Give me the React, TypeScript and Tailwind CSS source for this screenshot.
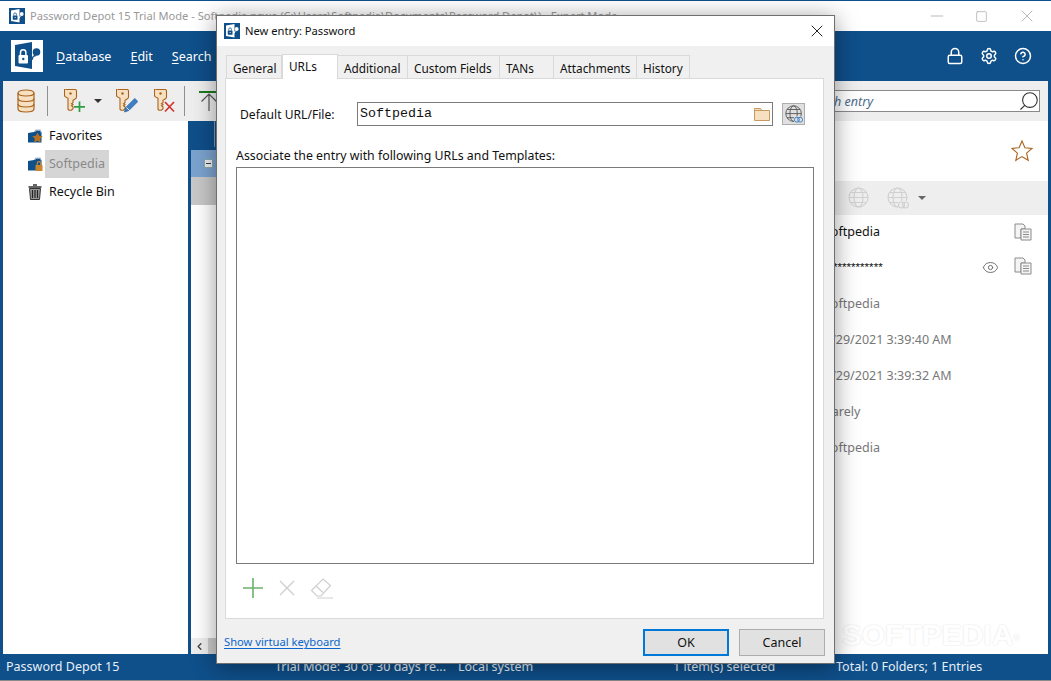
import React from "react";
import { Lock, Settings, CircleHelp, X, Minus, Square, Eye, Search, ChevronLeft } from "lucide-react";

const ORANGE = "#a9631d";
const FILL = "#f7e0c2";

function KeyIcon({ badge }: { badge: "plus" | "pen" | "x" }) {
  return (
    <svg width="22" height="24" viewBox="0 0 22 24" className="shrink-0">
      <path
        d="M2 .5h9a1.500 1.500 0 0 1 1.500 1.500v6a2 2 0 0 1-1 1.700l-2.500 1.500v2.500l-1.500 1 1.500 1-1.500 1 1.500 1v2l-1.500 1.500h-2.500l-1-1v-10.800l-2.500-1.500a2 2 0 0 1-1-1.700v-6a1.500 1.500 0 0 1 1.500-1.500z"
        fill={FILL}
        stroke={ORANGE}
        strokeWidth="1.100"
      />
      <circle cx="6.500" cy="4.500" r="1.200" fill={ORANGE} />
      {badge === "plus" && <path d="M15.500 12.500v10.500M10 17.800h11" stroke="#2f9e44" strokeWidth="1.700" fill="none" />}
      {badge === "pen" && (
        <>
          <path d="M8.500 23l1.300-4.500 9-9 3 3-9 9z" fill="#3f7fc4" stroke="#2a5f9e" strokeWidth=".8" />
          <path d="M10.500 18.500l3 3" stroke="#fff" strokeWidth=".8" />
        </>
      )}
      {badge === "x" && <path d="M11 13l9 9.500M20 13l-9 9.500" stroke="#d0342c" strokeWidth="1.700" fill="none" />}
    </svg>
  );
}

function DbIcon() {
  return (
    <svg width="18" height="24" viewBox="0 0 18 24" className="shrink-0">
      <path d="M1 4v16c0 2 3.500 3 8 3s8-1 8-3V4c0-2-3.500-3-8-3S1 2 1 4z" fill={FILL} stroke={ORANGE} strokeWidth="1.200" />
      <path d="M1 4c0 2 3.500 3 8 3s8-1 8-3M1 9.500c0 2 3.500 3 8 3s8-1 8-3M1 15c0 2 3.500 3 8 3s8-1 8-3" fill="none" stroke={ORANGE} strokeWidth="1.200" />
    </svg>
  );
}

function Globe({ chain, color, size = 22 }: { chain?: boolean; color: string; size?: number }) {
  const link = color === "#555" ? "#3f7fc4" : color;
  return (
    <svg width={size} height={size} viewBox="0 0 22 22" className="shrink-0">
      <circle cx="10.500" cy="10.500" r="9.500" fill="none" stroke={color} strokeWidth="1.100" />
      <ellipse cx="10.500" cy="10.500" rx="4.500" ry="9.500" fill="none" stroke={color} strokeWidth="1.100" />
      <path d="M1 10.500h19M2.500 5.500h16M2.500 15.500h16" fill="none" stroke={color} strokeWidth="1.100" />
      {chain && (
        <>
          <rect x="11" y="14" width="11" height="8" fill={color === "#555" ? "#e0e0e0" : "#eeeeee"} />
          <circle cx="14.500" cy="18" r="3" fill="none" stroke={link} strokeWidth="1.200" />
          <circle cx="18.500" cy="18" r="3" fill="none" stroke={link} strokeWidth="1.200" />
        </>
      )}
    </svg>
  );
}

function CopyIcon() {
  return (
    <svg width="18" height="18" viewBox="0 0 18 18" className="shrink-0">
      <path d="M1 1h8l2 2v3H7v9H1z" fill="#f4f4f4" stroke="#8a8a8a" />
      <path d="M7 6h10v11H7z" fill="#f4f4f4" stroke="#8a8a8a" />
      <path d="M9 9h6M9 11.500h6M9 14h6" stroke="#8a8a8a" />
    </svg>
  );
}

function TreeFolder({ kind }: { kind: "star" | "lock" }) {
  return (
    <svg width="15" height="14" viewBox="0 0 15 14" className="shrink-0">
      <path d="M0 4l6-1 1.500-1.500H12L13.500 3v10.500H0z" fill="#0f4f8a" />
      <path d="M7.500 3V1h5v2.500" fill="none" stroke="#9ab" strokeWidth=".8" />
      {kind === "star" ? (
        <path d="M9.500 3.500l1.700 3.300 3.600.5-2.600 2.500.6 3.700-3.300-1.700-3.300 1.700.6-3.700-2.600-2.500 3.600-.5z" fill="#b5711f" />
      ) : (
        <>
          <rect x="7.500" y="8" width="7" height="6" rx=".5" fill="#c9862d" />
          <path d="M9.200 8V6.500a1.800 1.800 0 0 1 3.600 0V8" fill="none" stroke="#c9862d" strokeWidth="1.200" />
        </>
      )}
    </svg>
  );
}

function Logo({ size, blue }: { size: number; blue: boolean }) {
  const a = blue ? "#fff" : "#0f4f8a";
  const b = blue ? "#0f4f8a" : "#fff";
  return (
    <svg width={size} height={size} viewBox="0 0 32 32" className="shrink-0">
      <rect width="32" height="32" fill={b} />
      <path d="M4 5l17-3v27L4 26z" fill={a} />
      <rect x="7.500" y="15" width="9.500" height="8.500" rx="1" fill={b} />
      <path d="M9.500 15v-2.500a2.700 2.700 0 0 1 5.400 0V15" fill="none" stroke={b} strokeWidth="1.500" />
      <circle cx="12.300" cy="19" r="1.200" fill={a} />
      <circle cx="25.500" cy="12" r="3.800" fill={a} />
      <path d="M23.500 14.500l-3.500 3.500v2.500l2-1 .5-2.500 3-1z" fill={a} />
    </svg>
  );
}

const TABS = [
  { label: "General", w: "w-[56px]" },
  { label: "URLs", w: "w-[56px]", active: true },
  { label: "Additional", w: "w-[70px]" },
  { label: "Custom Fields", w: "w-[92px]" },
  { label: "TANs", w: "w-[54px]" },
  { label: "Attachments", w: "w-[83px]" },
  { label: "History", w: "w-[53px]" },
];

function Underlined({ first, rest }: { first: string; rest: string }) {
  return (
    <span>
      <span className="underline underline-offset-2">{first}</span>
      {rest}
    </span>
  );
}

function InfoRow({ text, dark, lower, h = "h-9", icons }: { text: string; dark?: boolean; lower?: boolean; h?: string; icons?: React.ReactNode }) {
  return (
    <div className={`flex items-center ${h} pr-[16px] pl-[181px]`}>
      <span className={`${dark ? "text-[#111]" : "text-[#777]"} ${lower ? "pt-[2px]" : ""}`}>{text}</span>
      <div className="ml-auto flex items-center gap-[14px]">{icons}</div>
    </div>
  );
}

export default function App() {
  return (
    <div
      className="relative flex h-[681px] w-[1051px] flex-col overflow-hidden bg-[#0f4f8a] text-[12.500px] text-[#111]"
      style={{ fontFamily: '"Noto Sans", "Open Sans", sans-serif' }}
    >
      {/* Title bar */}
      <div className="mt-px flex h-[30px] shrink-0 items-center bg-white pr-[14px] pl-[9px]">
        <Logo size={16} blue />
        <span className="ml-[5px] text-[11.100px] whitespace-nowrap text-[#999]">
          Password Depot 15 Trial Mode - Softpedia.pswe (C:\Users\Softpedia\Documents\Password Depot\) - Expert Mode
        </span>
        <div className="ml-auto flex items-center text-[#999]">
          <Minus size={20} strokeWidth={0.800} />
          <Square size={13} strokeWidth={1.100} className="mr-[29px] ml-[28px]" />
          <X size={20} strokeWidth={0.800} />
        </div>
      </div>

      {/* Blue header */}
      <div className="flex h-[50px] shrink-0 items-center pr-[19px] pl-[11px] text-[12.500px] text-white">
        <Logo size={32} blue={false} />
        <nav className="ml-[13px] flex gap-[19px] pt-[3px]">
          <Underlined first="D" rest="atabase" />
          <Underlined first="E" rest="dit" />
          <Underlined first="S" rest="earch" />
        </nav>
        <div className="ml-auto flex items-center gap-[16px]">
          <Lock size={18} strokeWidth={2} />
          <Settings size={18} strokeWidth={2} />
          <CircleHelp size={18} strokeWidth={2} />
        </div>
      </div>

      {/* Toolbar */}
      <div className="mx-[3px] flex h-[40px] shrink-0 items-center bg-[#eeeeee] pr-[8px] pl-[14px]">
        <DbIcon />
        <div className="ml-[12px] h-[30px] w-px bg-[#8f8f8f]" />
        <div className="ml-[16px]">
          <KeyIcon badge="plus" />
        </div>
        <div className="ml-[8px] h-0 w-0 border-x-[4px] border-t-[4px] border-x-transparent border-t-[#333]" />
        <div className="ml-[14px]">
          <KeyIcon badge="pen" />
        </div>
        <div className="ml-[16px]">
          <KeyIcon badge="x" />
        </div>
        <div className="ml-[8px] h-[30px] w-px bg-[#8f8f8f]" />
        <div className="ml-[14px] flex w-[20px] flex-col items-center self-start pt-[10px]">
          <div className="h-[2px] w-[20px] bg-[#1d7a1d]" />
          <svg width="18" height="18" viewBox="0 0 18 18">
            <path d="M1.500 8.500L9 1l7.500 7.500M9 1v17" fill="none" stroke="#555" strokeWidth="1.200" />
          </svg>
        </div>
        <div className="ml-auto flex h-[22px] w-[400px] items-center border border-[#8a8a8a] bg-white pl-[163px] text-[#4a6a8a] italic">
          <span className="pt-[2px]">Search entry</span>
          <Search size={22} strokeWidth={1.200} className="-mr-px ml-auto -scale-x-100 text-[#333]" />
        </div>
      </div>

      {/* Body */}
      <div className="mx-[3px] flex min-h-0 flex-1 gap-[3px]">
        {/* Tree */}
        <div className="w-[185px] shrink-0 bg-white pt-[1px]">
          <div className="flex h-[28px] items-center pl-[25px]">
            <TreeFolder kind="star" />
            <span className="ml-[6px]">Favorites</span>
          </div>
          <div className="flex h-[28px] items-center pl-[25px]">
            <TreeFolder kind="lock" />
            <span className="ml-[2px] flex h-[28px] items-center bg-[#d5d5d5] px-[4px] text-[#8a8a8a]">Softpedia</span>
          </div>
          <div className="flex h-[28px] items-center pl-[25px]">
            <svg width="14" height="16" viewBox="0 0 14 16" className="mr-px shrink-0">
              <path d="M5 1h4M.5 3h13" stroke="#333" strokeWidth="1.500" />
              <path d="M1.500 4.500h11l-1 11h-9z" fill="#999" stroke="#333" />
              <path d="M4.500 6v8M7 6v8M9.500 6v8" stroke="#222" strokeWidth="1.200" />
            </svg>
            <span className="ml-[6px]">Recycle Bin</span>
          </div>
        </div>

        {/* Center list */}
        <div className="flex w-[449px] shrink-0 flex-col bg-white">
          <div className="h-[29px] bg-[#0f4f8a] pl-[23px]">
            <div className="h-[26px] w-px bg-[#8a9aaa]" />
          </div>
          <div className="flex h-[27px] items-center bg-[#7ba3cf] pl-[13px]">
            <div className="flex h-[9px] w-[9px] items-center justify-center border border-[#8aa] bg-[#eee]">
              <div className="h-px w-[5px] bg-[#345]" />
            </div>
          </div>
          <div className="h-[28px] bg-[#c8c8c8]" />
          <div className="flex-1" />
          <div className="flex h-[16px] items-center bg-[#eeeeee]">
            <ChevronLeft size={11} strokeWidth={3} className="ml-[3px] text-[#444]" />
            <div className="ml-[3px] h-full w-[60px] bg-[#cdcdcd]" />
          </div>
        </div>

        {/* Details */}
        <div className="flex flex-1 flex-col bg-white">
          <div className="flex h-[60px] items-center justify-end pr-[14px]">
            <svg width="24" height="24" viewBox="0 0 24 24">
              <path d="M12 2l2.900 6.700 7.100.7-5.400 4.800 1.600 7.100L12 17.600l-6.200 3.700 1.600-7.100L2 9.400l7.100-.7z" fill="#fff" stroke={ORANGE} strokeWidth="1.100" />
            </svg>
          </div>
          <div className="flex h-[34px] items-center bg-[#eeeeee] pl-[205px]">
            <Globe color="#d0d0d0" />
            <div className="ml-[17px]">
              <Globe chain color="#d0d0d0" />
            </div>
            <div className="ml-[9px] h-0 w-0 border-x-[4px] border-t-[4px] border-x-transparent border-t-[#666]" />
          </div>
          <InfoRow text="Softpedia" dark lower h="h-[33px]" icons={<CopyIcon />} />
          <div className="flex h-[36px] items-center pr-[16px] pl-[181px]">
            <span className="pt-[2px] text-[11.600px] text-[#111]" style={{ fontFamily: '"Liberation Sans", sans-serif' }}>
              *************
            </span>
            <div className="ml-auto flex items-center gap-[15px]">
              <Eye size={17} strokeWidth={1.300} className="mt-[2px] text-[#666]" />
              <CopyIcon />
            </div>
          </div>
          <InfoRow text="Softpedia" lower h="h-[38px]" />
          <InfoRow text="7/29/2021 3:39:40 AM" />
          <InfoRow text="7/29/2021 3:39:32 AM" />
          <InfoRow text="Rarely" />
          <InfoRow text="Softpedia" />
          <div className="relative flex-1">
            <span
              className="absolute right-[28px] bottom-[-3px] text-[30px] font-bold whitespace-nowrap text-white"
              style={{ textShadow: "0 0 2px #dcdcdc", fontFamily: '"Liberation Sans", sans-serif' }}
            >
              SOFTPEDIA
              <sup className="text-[9px] font-normal">®</sup>
            </span>
          </div>
        </div>
      </div>

      {/* Status bar */}
      <div className="flex h-[27px] shrink-0 items-center border-b border-[#8a8a8a] pl-[6px] text-[#e8f0f8]">
        <span className="w-[269px]">Password Depot 15</span>
        <span className="w-[183px] whitespace-nowrap">Trial Mode: 30 of 30 days re...</span>
        <span className="w-[215px]">Local system</span>
        <span className="w-[163px]">1 item(s) selected</span>
        <span>Total: 0 Folders; 1 Entries</span>
      </div>

      {/* Modal dialog */}
      <div className="absolute top-[15px] left-[216px] flex h-[649px] w-[619px] flex-col border border-[#6f6f6f] bg-[#f0f0f0] shadow-[0_3px_22px_rgba(0,0,0,0.4)]">
        <div className="flex h-[30px] shrink-0 items-center bg-white px-[7px]">
          <Logo size={16} blue />
          <span className="ml-[5px] text-[11.200px]">New entry: Password</span>
          <X size={20} strokeWidth={1.100} className="ml-auto text-[#111]" />
        </div>

        <div className="flex min-h-0 flex-1 flex-col pt-[8px] pr-[9px] pl-[8px]">
          {/* Tabs */}
          <div className="relative z-10 ml-[1px] flex h-[24px] shrink-0 items-end text-[11.800px]">
            {TABS.map((t) =>
              t.active ? (
                <div key={t.label} className={`${t.w} -mb-px flex h-[25px] items-start border border-b-0 border-[#d9d9d9] bg-white pt-[3px] pl-[6px] whitespace-nowrap`}>
                  {t.label}
                </div>
              ) : (
                <div key={t.label} className={`${t.w} flex h-[23px] items-center border border-b-0 border-l-0 border-[#d9d9d9] pt-[3px] pl-[6px] whitespace-nowrap first:border-l`}>
                  {t.label}
                </div>
              ),
            )}
          </div>

          {/* Pane */}
          <div className="mr-[1px] flex h-[541px] shrink-0 flex-col border border-[#d9d9d9] bg-white px-[10px]">
            <div className="mt-[23px] flex h-[24px] items-center">
              <span className="ml-[4px] w-[117px] pt-[3px] text-[12.100px]">Default URL/File:</span>
              <div className="flex h-[24px] w-[416px] items-center border border-[#7a7a7a] pr-[2px] pl-[2px]">
                <span style={{ fontFamily: '"Liberation Mono", monospace' }} className="text-[13.330px]">
                  Softpedia
                </span>
                <svg width="16" height="14" viewBox="0 0 16 14" className="ml-auto">
                  <path d="M.5 1.500h6l1.500 2h7.500v10H.5z" fill={FILL} stroke="#c49a5e" />
                  <path d="M.5 3.500h7.500" stroke="#c49a5e" />
                </svg>
              </div>
              <div className="ml-[9px] flex h-[22px] w-[23px] items-center justify-center border border-[#adadad] bg-[#e0e0e0]">
                <Globe chain color="#555" size={18} />
              </div>
            </div>
            <div className="mt-[21px] text-[12.350px] leading-[18px]">Associate the entry with following URLs and Templates:</div>
            <div className="mt-[2px] h-[397px] w-[578px] border border-[#7a7a7a] bg-white" />
            <div className="mt-[12px] flex h-[24px] items-center pl-[6px]">
              <svg width="22" height="22" viewBox="0 0 22 22">
                <path d="M11 1v20M1 11h20" stroke="#6cb26c" strokeWidth="1.600" />
              </svg>
              <svg width="18" height="18" viewBox="0 0 18 18" className="ml-[14px]">
                <path d="M2 2l14 14M16 2L2 16" stroke="#cfcfcf" strokeWidth="1.400" />
              </svg>
              <svg width="23" height="23" viewBox="0 0 23 23" className="ml-[14px]">
                <path d="M1.500 13.500L13 2l7.500 6.500L11 19H7z" fill="#fff" stroke="#cfcfcf" strokeWidth="1.200" />
                <path d="M6 9l7 6.500M7 21h16" stroke="#cfcfcf" strokeWidth="1.200" />
              </svg>
            </div>
          </div>

          {/* Footer */}
          <div className="mt-[10px] flex h-[27px] items-center">
            <a className="-ml-px text-[11.200px] text-[#0a66cc] underline underline-offset-2">Show virtual keyboard</a>
            <button className="ml-auto h-[27px] w-[86px] border-2 border-[#0078d7] bg-[#e1e1e1] pt-[1px] text-[#111]">OK</button>
            <button className="ml-[10px] h-[27px] w-[86px] border border-[#adadad] bg-[#e1e1e1] pt-[1px] text-[#111]">Cancel</button>
          </div>
        </div>
      </div>
    </div>
  );
}
